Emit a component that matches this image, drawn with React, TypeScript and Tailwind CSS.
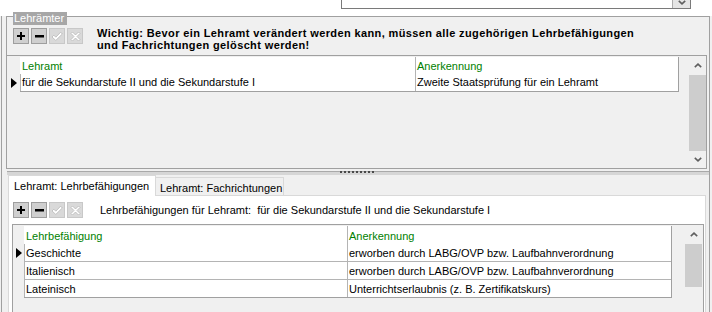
import React from "react";

function ToolButton({ children, disabled }: { children: React.ReactNode; disabled?: boolean }) {
  return (
    <div
      className={
        disabled
          ? "w-4 h-4 border border-[#c8c8c8] bg-[#d9d9d9] flex items-center justify-center"
          : "w-4 h-4 border border-[#9e9e9e] bg-[#cfcfcf] flex items-center justify-center"
      }
    >
      {children}
    </div>
  );
}

function Toolbar() {
  return (
    <div className="flex gap-[2px] shrink-0">
      <ToolButton>
        <svg width="8" height="8" viewBox="0 0 8 8">
          <rect x="3" y="0" width="2" height="8" fill="#000" />
          <rect x="0" y="3" width="8" height="2" fill="#000" />
        </svg>
      </ToolButton>
      <ToolButton>
        <svg width="9" height="3" viewBox="0 0 9 3">
          <rect x="0" y="0" width="9" height="2.5" fill="#000" />
        </svg>
      </ToolButton>
      <ToolButton disabled>
        <svg width="12" height="11" viewBox="0 0 12 11">
          <path d="M1 6 L2.8 4.2 L4.8 6.2 L9.6 1.2 L11.3 3 L4.8 9.4 Z" fill="#fff" stroke="#b8b8b8" strokeWidth="0.8" />
        </svg>
      </ToolButton>
      <ToolButton disabled>
        <svg width="11" height="11" viewBox="0 0 11 11">
          <path
            d="M1 2.5 L2.5 1 L5.5 4 L8.5 1 L10 2.5 L7 5.5 L10 8.5 L8.5 10 L5.5 7 L2.5 10 L1 8.5 L4 5.5 Z"
            fill="#fff"
            stroke="#b8b8b8"
            strokeWidth="0.8"
          />
        </svg>
      </ToolButton>
    </div>
  );
}

function ChevronUp() {
  return (
    <svg width="8" height="5" viewBox="0 0 8 5">
      <polyline points="0.8,4.2 4,1.2 7.2,4.2" fill="none" stroke="#5f5f5f" strokeWidth="1.6" />
    </svg>
  );
}

function ChevronDown() {
  return (
    <svg width="8" height="5" viewBox="0 0 8 5">
      <polyline points="0.8,0.8 4,3.8 7.2,0.8" fill="none" stroke="#5f5f5f" strokeWidth="1.6" />
    </svg>
  );
}

function Arrow() {
  return (
    <svg width="6" height="10" viewBox="0 0 6 10">
      <polygon points="0,0 6,5 0,10" fill="#000" />
    </svg>
  );
}

function Scrollbar({ thumb }: { thumb: string }) {
  return (
    <div className="w-[17px] flex flex-col bg-[#f0f0f0] shrink-0">
      <div className="h-[18px] flex items-center justify-center pt-[1px]">
        <ChevronUp />
      </div>
      <div className={thumb}></div>
      <div className="flex-1"></div>
      <div className="h-[17px] flex items-center justify-center pb-[1px]">
        <ChevronDown />
      </div>
    </div>
  );
}

export default function App() {
  return (
    <div className="w-[712px] h-[312px] overflow-hidden bg-[#f0f0f0] flex flex-col font-['Liberation_Sans',Arial,sans-serif] text-[11px] text-black">
      {/* top strip with combobox */}
      <div className="h-[16px] bg-white shrink-0 flex">
        <div className="ml-[341px] mt-[-1px] w-[350px] h-[10px] border border-[#7a7a7a] bg-white flex justify-end">
          <div className="w-[18px] h-full bg-[#e5e5e5] border-l border-[#adadad] flex justify-center items-start">
            <ChevronDown />
          </div>
        </div>
      </div>

      {/* main panel */}
      <div className="flex-1 ml-[1px] w-[709px] border-l border-r border-[#a0a0a0] flex flex-col">
        {/* group box Lehrämter */}
        <div className="relative ml-[4px] w-[703px] border-t border-l border-[#a0a0a0] flex flex-col shrink-0">
          <div className="absolute left-[6px] top-[-5px] h-[13px] w-[54px] bg-[#a7a7a7] text-white leading-[13px] pl-[1px]">
            Lehrämter
          </div>
          {/* toolbar */}
          <div className="h-[38px] flex items-start pl-[6px]">
            <div className="mt-[11px]">
              <Toolbar />
            </div>
            <div className="ml-[14px] mt-[10px] font-bold leading-[12px] tracking-[0.38px] whitespace-nowrap">
              Wichtig: Bevor ein Lehramt verändert werden kann, müssen alle zugehörigen Lehrbefähigungen
              <br />
              und Fachrichtungen gelöscht werden!
            </div>
          </div>
          {/* grid 1 */}
          <div className="w-[700px] h-[114px] border-t border-r border-b border-[#a0a0a0] bg-[#f0f0f0] flex">
            <div className="w-[13px] shrink-0 pt-[18px] flex flex-col">
              <div className="h-[17px] flex items-center pl-[4px]">
                <Arrow />
              </div>
            </div>
            <div className="w-[659px] shrink-0 pt-[1px]">
              <div className="bg-white border-r border-[#a0a0a0]">
                <div className="flex h-[17px]">
                  <div className="w-[395px] pl-[2px] pt-[1px] leading-[16px] text-[#008000]">Lehramt</div>
                  <div className="flex-1 border-l border-[#b4b4b4] pl-[1px] pt-[1px] leading-[16px] text-[#008000]">
                    Anerkennung
                  </div>
                </div>
                <div className="flex h-[18px] border-b border-[#a0a0a0]">
                  <div className="w-[395px] border-l border-[#b4b4b4] pl-[1px] leading-[17px] whitespace-nowrap">
                    für die Sekundarstufe II und die Sekundarstufe I
                  </div>
                  <div className="flex-1 border-l border-[#b4b4b4] pl-[1px] leading-[17px] whitespace-nowrap">
                    Zweite Staatsprüfung für ein Lehramt
                  </div>
                </div>
              </div>
            </div>
            <div className="w-[10px] shrink-0"></div>
            <Scrollbar thumb="h-[76px] mt-[1px] bg-[#cdcdcd]" />
          </div>
        </div>

        {/* splitter */}
        <div className="h-[6px] ml-[5px] shrink-0 flex flex-col">
          <div className="h-[2px]"></div>
          <div className="h-[4px] border-t border-[#a9a9a9] bg-[#d6d6d6] flex">
            <div className="ml-[333px] mt-[-1px] flex gap-[2px]">
              <div className="w-[2px] h-[2px] bg-[#4a4a4a]"></div>
              <div className="w-[2px] h-[2px] bg-[#4a4a4a]"></div>
              <div className="w-[2px] h-[2px] bg-[#4a4a4a]"></div>
              <div className="w-[2px] h-[2px] bg-[#4a4a4a]"></div>
              <div className="w-[2px] h-[2px] bg-[#4a4a4a]"></div>
              <div className="w-[2px] h-[2px] bg-[#4a4a4a]"></div>
              <div className="w-[2px] h-[2px] bg-[#4a4a4a]"></div>
              <div className="w-[2px] h-[2px] bg-[#4a4a4a]"></div>
              <div className="w-[2px] h-[2px] bg-[#4a4a4a]"></div>
            </div>
          </div>
        </div>

        {/* tabs */}
        <div className="ml-[6px] w-[698px] flex flex-col">
          <div className="h-[20px] flex items-start shrink-0">
            <div className="relative z-10 w-[148px] h-[21px] bg-white border-l border-t border-r border-[#d9d9d9] pl-[5px] pt-[2px] leading-[16px] whitespace-nowrap">
              Lehramt: Lehrbefähigungen
            </div>
            <div className="mt-[2px] w-[128px] h-[18px] bg-[#f0f0f0] border-t border-r border-[#d9d9d9] pl-[4px] pt-[2px] leading-[16px] whitespace-nowrap">
              Lehramt: Fachrichtungen
            </div>
          </div>
          <div className="bg-white border-l border-t border-r border-[#d9d9d9] pl-[4px] pt-[6px] h-[160px]">
            <div className="flex items-start">
              <Toolbar />
              <div className="ml-[17px] leading-[16px] whitespace-pre">
                Lehrbefähigungen für Lehramt:  für die Sekundarstufe II und die Sekundarstufe I
              </div>
            </div>
            {/* grid 2 */}
            <div className="mt-[6px] ml-[-1px] w-[692px] h-[120px] border border-[#a0a0a0] bg-[#f0f0f0] flex">
              <div className="w-[11px] shrink-0 pt-[19px] flex flex-col">
                <div className="h-[17px] flex items-center pl-[3px] pt-[1px]">
                  <Arrow />
                </div>
              </div>
              <div className="w-[648px] shrink-0 pt-[1px]">
                <div className="bg-white border-r border-[#a0a0a0]">
                  <div className="flex h-[18px]">
                    <div className="w-[323px] pl-[2px] pt-[2px] leading-[16px] text-[#008000]">Lehrbefähigung</div>
                    <div className="flex-1 border-l border-[#b4b4b4] pl-[1px] pt-[2px] leading-[16px] text-[#008000]">
                      Anerkennung
                    </div>
                  </div>
                  <div className="flex h-[18px] border-b border-[#b4b4b4]">
                    <div className="w-[323px] border-l border-[#b4b4b4] pl-[1px] pt-[2px] leading-[15px]">Geschichte</div>
                    <div className="flex-1 border-l border-[#b4b4b4] pl-[1px] pt-[2px] leading-[15px] whitespace-nowrap">
                      erworben durch LABG/OVP bzw. Laufbahnverordnung
                    </div>
                  </div>
                  <div className="flex h-[18px] border-b border-[#b4b4b4]">
                    <div className="w-[323px] border-l border-[#b4b4b4] pl-[1px] pt-[2px] leading-[15px]">Italienisch</div>
                    <div className="flex-1 border-l border-[#b4b4b4] pl-[1px] pt-[2px] leading-[15px] whitespace-nowrap">
                      erworben durch LABG/OVP bzw. Laufbahnverordnung
                    </div>
                  </div>
                  <div className="flex h-[18px] border-b border-[#a0a0a0]">
                    <div className="w-[323px] border-l border-[#b4b4b4] pl-[1px] pt-[2px] leading-[15px]">Lateinisch</div>
                    <div className="flex-1 border-l border-[#b4b4b4] pl-[1px] pt-[2px] leading-[15px] whitespace-nowrap">
                      Unterrichtserlaubnis (z. B. Zertifikatskurs)
                    </div>
                  </div>
                </div>
              </div>
              <div className="w-[13px] shrink-0"></div>
              <Scrollbar thumb="h-[43px] mt-[1px] bg-[#cdcdcd]" />
            </div>
          </div>
        </div>
      </div>
    </div>
  );
}
